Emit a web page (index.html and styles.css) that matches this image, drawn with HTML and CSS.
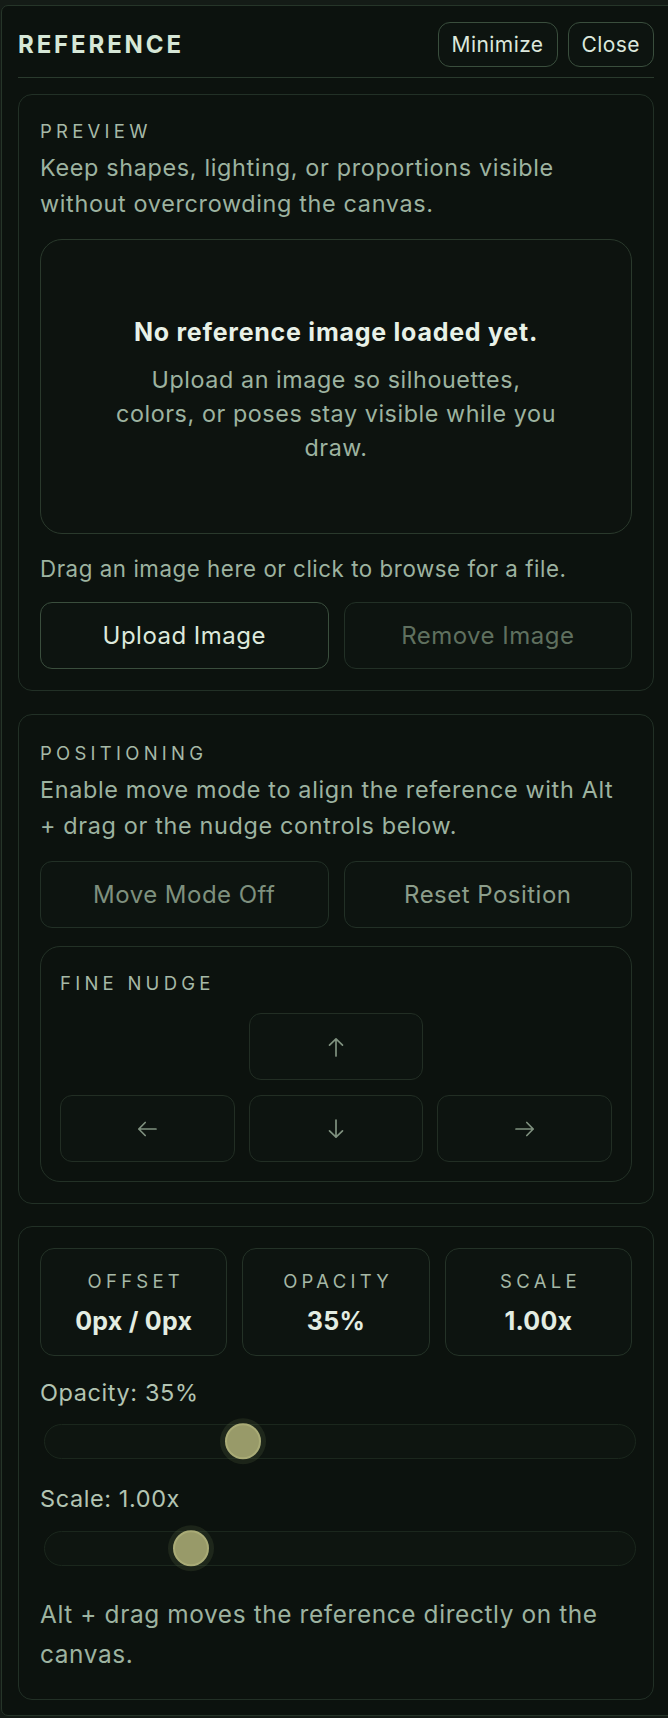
FILE: index.html
```html
<!DOCTYPE html>
<html lang="en">
<head>
<meta charset="utf-8">
<title>Reference</title>
<link rel="stylesheet" href="styles.css">
</head>
<body>
<div class="panel">
  <header class="panel-header">
    <h1 class="panel-title">REFERENCE</h1>
    <div class="header-actions">
      <button class="btn-sm">Minimize</button>
      <button class="btn-sm">Close</button>
    </div>
  </header>

  <section class="card">
    <div class="section-label">PREVIEW</div>
    <p class="section-desc">Keep shapes, lighting, or proportions visible without overcrowding the canvas.</p>
    <div class="dropzone">
      <div class="dropzone-title">No reference image loaded yet.</div>
      <p class="dropzone-text">Upload an image so silhouettes, colors, or poses stay visible while you draw.</p>
    </div>
    <p class="section-desc hint">Drag an image here or click to browse for a file.</p>
    <div class="btn-row">
      <button class="btn btn-primary">Upload Image</button>
      <button class="btn btn-muted">Remove Image</button>
    </div>
  </section>

  <section class="card card-positioning">
    <div class="section-label">POSITIONING</div>
    <p class="section-desc">Enable move mode to align the reference with Alt + drag or the nudge controls below.</p>
    <div class="btn-row">
      <button class="btn btn-off">Move Mode Off</button>
      <button class="btn btn-secondary">Reset Position</button>
    </div>
    <div class="nudge">
      <div class="section-label">FINE NUDGE</div>
      <div class="nudge-grid">
        <button class="nudge-btn nudge-up" aria-label="Nudge up">
          <svg width="16" height="20" viewBox="0 0 16 20"><path d="M8 19V1.8M1.5 8.2L8 1.8l6.5 6.4"/></svg>
        </button>
        <button class="nudge-btn nudge-left" aria-label="Nudge left">
          <svg width="20" height="16" viewBox="0 0 20 16"><path d="M19 8H1.8M8.2 1.5L1.8 8l6.4 6.5"/></svg>
        </button>
        <button class="nudge-btn nudge-down" aria-label="Nudge down">
          <svg width="16" height="20" viewBox="0 0 16 20"><path d="M8 1v17.2M1.5 11.8L8 18.2l6.5-6.4"/></svg>
        </button>
        <button class="nudge-btn nudge-right" aria-label="Nudge right">
          <svg width="20" height="16" viewBox="0 0 20 16"><path d="M1 8h17.2M11.8 1.5L18.2 8l-6.4 6.5"/></svg>
        </button>
      </div>
    </div>
  </section>

  <section class="card card-controls">
    <div class="stats">
      <div class="stat">
        <div class="stat-label">OFFSET</div>
        <div class="stat-value">0px / 0px</div>
      </div>
      <div class="stat">
        <div class="stat-label">OPACITY</div>
        <div class="stat-value">35%</div>
      </div>
      <div class="stat">
        <div class="stat-label">SCALE</div>
        <div class="stat-value">1.00x</div>
      </div>
    </div>
    <div class="slider-label">Opacity: 35%</div>
    <div class="slider"><span class="thumb" style="--p:0.325"></span></div>
    <div class="slider-label slider-label-2">Scale: 1.00x</div>
    <div class="slider slider-2"><span class="thumb" style="--p:0.2316"></span></div>
    <p class="footer-note">Alt + drag moves the reference directly on the canvas.</p>
  </section>
</div>
</body>
</html>
```

FILE: styles.css
```css
* { box-sizing: border-box; }

html, body {
  margin: 0;
  padding: 0;
}

body {
  background: #141b16;
  overflow: hidden;
  font-family: Inter, "Noto Sans", "Liberation Sans", sans-serif;
  color: #9db3a0;
}

.panel {
  margin: 5px 0 0 1px;
  width: 700px;
  height: 1711px;
  padding: 0 0 0 16px;
  background: #0c120e;
  border: 1px solid #263529;
  border-radius: 7px;
}

.panel-header,
.card {
  width: 636px;
}

.panel-header {
  display: flex;
  align-items: center;
  justify-content: space-between;
  padding: 16px 0 10px;
  border-bottom: 1px solid #2a3a2d;
}

.panel-title {
  margin: 0;
  font-size: 24px;
  font-weight: 700;
  letter-spacing: 0.12em;
  color: #d6e7d7;
}

.header-actions {
  display: flex;
  gap: 10px;
}

button {
  font-family: inherit;
  cursor: pointer;
}

.btn-sm {
  height: 45px;
  padding: 0 13px;
  background: #0d1410;
  border: 1px solid #3a4e3d;
  border-radius: 12px;
  color: #dce8dc;
  font-size: 21px;
  letter-spacing: 0.02em;
}

.card {
  margin-top: 16px;
  padding: 24px 21px 21px;
  border: 1px solid #223026;
  border-radius: 14px;
  background: #0c120e;
}

.card-positioning {
  margin-top: 23px;
  padding-top: 26px;
}

.card-controls {
  margin-top: 22px;
  padding-top: 21px;
  padding-bottom: 25px;
}

.section-label {
  font-size: 18.5px;
  line-height: 24px;
  letter-spacing: 0.23em;
  color: #a6b9a7;
}

.section-desc {
  margin: 7px 0 0;
  max-width: 586px;
  font-size: 23.4px;
  line-height: 36px;
  letter-spacing: 0.028em;
  color: #9db3a0;
}

.section-desc.hint {
  margin-top: 17px;
  font-size: 22.3px;
  letter-spacing: 0.025em;
}

.dropzone {
  margin-top: 17px;
  height: 295px;
  display: flex;
  flex-direction: column;
  align-items: center;
  justify-content: center;
  padding: 9px 40px 0;
  text-align: center;
  border: 1px solid #2a392c;
  border-radius: 22px;
  background: #0d130f;
}

.dropzone-title {
  font-size: 25px;
  line-height: 30px;
  font-weight: 700;
  letter-spacing: 0.03em;
  color: #e8f1e7;
}

.dropzone-text {
  margin: 16px 0 0;
  max-width: 440px;
  font-size: 23.3px;
  line-height: 34px;
  letter-spacing: 0.025em;
  color: #9db3a0;
}

.btn-row {
  margin-top: 15px;
  display: grid;
  grid-template-columns: 1fr 1fr;
  gap: 15px;
}

.card-positioning .btn-row {
  margin-top: 17px;
}

.btn {
  height: 67px;
  background: #0d1410;
  border: 1px solid #223026;
  border-radius: 12px;
  font-size: 24px;
  letter-spacing: 0.02em;
}

.btn-primary {
  border-color: #3a4e3d;
  color: #dde9dc;
}

.btn-muted {
  color: #5f705f;
}

.btn-off {
  color: #7e907e;
}

.btn-secondary {
  color: #8c9e8b;
}

.nudge {
  margin-top: 18px;
  padding: 24px 19px 19px;
  border: 1px solid #233126;
  border-radius: 20px;
}

.nudge-grid {
  margin-top: 18px;
  display: grid;
  grid-template-columns: repeat(3, 1fr);
  grid-template-rows: 67px 67px;
  gap: 15px 14px;
}

.nudge-up { grid-column: 2; grid-row: 1; }
.nudge-left { grid-column: 1; grid-row: 2; }
.nudge-down { grid-column: 2; grid-row: 2; }
.nudge-right { grid-column: 3; grid-row: 2; }

.nudge-btn {
  display: flex;
  align-items: center;
  justify-content: center;
  background: #0d1410;
  border: 1px solid #222e24;
  border-radius: 12px;
  color: #7f917f;
}

.nudge-btn svg {
  fill: none;
  stroke: currentColor;
  stroke-width: 1.7;
  stroke-linecap: round;
  stroke-linejoin: round;
}

.stats {
  display: grid;
  grid-template-columns: repeat(3, 1fr);
  gap: 15px;
}

.stat {
  height: 108px;
  padding-top: 20px;
  text-align: center;
  border: 1px solid #243227;
  border-radius: 14px;
  background: #0d1410;
}

.stat-label {
  font-size: 18.5px;
  line-height: 24px;
  letter-spacing: 0.23em;
  padding-left: 0.23em;
  color: #a5b8a6;
}

.stat-value {
  margin-top: 12px;
  font-size: 25px;
  line-height: 32px;
  font-weight: 700;
  letter-spacing: 0.01em;
  color: #e3ede2;
}

.slider-label {
  margin-top: 19px;
  font-size: 23.5px;
  line-height: 36px;
  letter-spacing: 0.025em;
  color: #b3c4b2;
}

.slider-label-2 {
  margin-top: 22px;
}

.slider {
  position: relative;
  margin: 13px 0 0 4px;
  width: 100%;
  height: 35px;
  border: 1px solid #1b271d;
  border-radius: 18px;
  background: #0e1510;
}

.slider-2 {
  margin-top: 14px;
}

.thumb {
  position: absolute;
  top: 50%;
  left: calc(18px + (100% - 36px) * var(--p));
  width: 36px;
  height: 36px;
  transform: translate(-50%, -52%);
  border-radius: 50%;
  background: #989a69;
  border: 2px solid #a9ab76;
  box-shadow: 0 0 0 5px rgba(110, 130, 85, 0.17);
}

.footer-note {
  margin: 28px 0 0;
  max-width: 586px;
  font-size: 24.4px;
  line-height: 40px;
  letter-spacing: 0.025em;
  color: #9db3a0;
}
```
